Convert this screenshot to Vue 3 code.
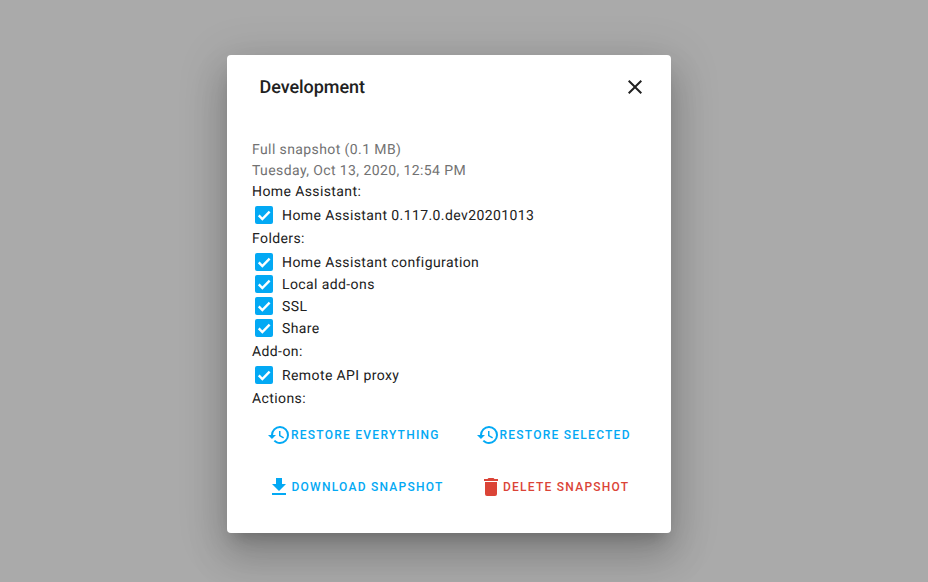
<script setup>
const groups = [
  { label: 'Home Assistant:', items: ['Home Assistant 0.117.0.dev20201013'] },
  { label: 'Folders:', items: ['Home Assistant configuration', 'Local add-ons', 'SSL', 'Share'] },
  { label: 'Add-on:', items: ['Remote API proxy'] },
]
const history = 'M13.5,8H12V13L16.28,15.54L17,14.33L13.5,12.25V8M13,3A9,9 0 0,0 4,12H1L4.96,16.03L9,12H6A7,7 0 0,1 13,5A7,7 0 0,1 20,12A7,7 0 0,1 13,19C11.07,19 9.32,18.21 8.06,16.94L6.64,18.36C8.27,20 10.5,21 13,21A9,9 0 0,0 22,12A9,9 0 0,0 13,3'
</script>

<template>
  <div class="scrim">
    <section class="dialog">
      <header class="head">
        <h2 class="title">Development</h2>
        <svg class="close" viewBox="0 0 24 24"><path d="M19,6.41L17.59,5L12,10.59L6.41,5L5,6.41L10.59,12L5,17.59L6.41,19L12,13.41L17.59,19L19,17.59L13.41,12L19,6.41Z" /></svg>
      </header>
      <div class="content">
        <div class="muted">Full snapshot (0.1 MB)</div>
        <div class="muted">Tuesday, Oct 13, 2020, 12:54 PM</div>
        <template v-for="g in groups" :key="g.label">
          <div class="label">{{ g.label }}</div>
          <div class="group">
            <label v-for="item in g.items" :key="item" class="row">
              <span class="box">
                <svg viewBox="0 0 24 24"><path d="M5 12.5l4.8 4.8L19.5 7.5" /></svg>
              </span>
              <span>{{ item }}</span>
            </label>
          </div>
        </template>
        <div class="label">Actions:</div>
        <div class="actions">
          <button class="btn"><svg class="ico" viewBox="0 0 24 24"><path :d="history" /></svg><span>RESTORE EVERYTHING</span></button>
          <button class="btn sel"><svg class="ico" viewBox="0 0 24 24"><path :d="history" /></svg><span>RESTORE SELECTED</span></button>
          <button class="btn"><svg class="ico" viewBox="0 0 24 24"><path d="M5,20H19V18H5M19,9H15V3H9V9H5L12,16L19,9Z" /></svg><span class="t1">DOWNLOAD SNAPSHOT</span></button>
          <button class="btn danger"><svg class="ico" viewBox="0 0 24 24"><path d="M19,4H15.5L14.5,3H9.5L8.5,4H5V6H19M6,19A2,2 0 0,0 8,21H16A2,2 0 0,0 18,19V7H6V19Z" /></svg><span>DELETE SNAPSHOT</span></button>
        </div>
      </div>
    </section>
  </div>
</template>

<style scoped>
.scrim {
  width: 928px;
  height: 582px;
  background: #aaaaaa;
  padding-top: 55px;
  box-sizing: border-box;
  font-family: Roboto, sans-serif;
  overflow: hidden;
  -webkit-font-smoothing: antialiased;
  text-rendering: geometricPrecision;
}
.dialog {
  width: 444px;
  height: 478px;
  margin-left: 227px;
  background: #fff;
  border-radius: 4px;
  box-shadow: 0 11px 15px -7px rgba(0,0,0,.2), 0 24px 38px 3px rgba(0,0,0,.14), 0 9px 46px 8px rgba(0,0,0,.12);
  box-sizing: border-box;
}
.head {
  display: flex;
  align-items: center;
  justify-content: space-between;
  height: 64px;
  padding: 0 24px 0 32.5px;
}
.title {
  margin: 0;
  font-size: 18px;
  font-weight: 500;
  letter-spacing: -.05px;
  color: #212121;
}
.close { width: 24px; height: 24px; fill: #212121; }
.content {
  padding: 21px 25px 0;
  font-size: 14px;
  line-height: 21px;
  letter-spacing: .4px;
  color: #212121;
}
.muted { color: #727272; }
.group { padding: 2px 0; }
.row {
  display: flex;
  align-items: center;
  height: 22px;
  padding-left: 3px;
  gap: 9px;
}
.box {
  width: 18px;
  height: 18px;
  margin-top: -2px;
  border-radius: 2px;
  background: #03a9f4;
  display: flex;
}
.box svg { fill: none; stroke: #fff; stroke-width: 3.2; width: 18px; height: 18px; }
.actions {
  display: grid;
  grid-template-columns: 202px 185px;
  grid-auto-rows: 36px;
  row-gap: 16px;
  margin: 7px 0 0 7px;
}
.btn {
  display: flex;
  align-items: center;
  justify-self: start;
  border: 0;
  background: none;
  padding: 0 8px;
  height: 36px;
  font-family: Roboto, sans-serif;
  font-size: 12px;
  font-weight: 500;
  letter-spacing: 1.25px;
  color: #03a9f4;
  white-space: nowrap;
}
.sel { margin-left: 6.5px; }
.danger { color: #db4437; margin-left: 10px; }
.ico { width: 24px; height: 24px; fill: currentColor; flex: none; }
.t1 { margin-left: .5px; }
</style>
